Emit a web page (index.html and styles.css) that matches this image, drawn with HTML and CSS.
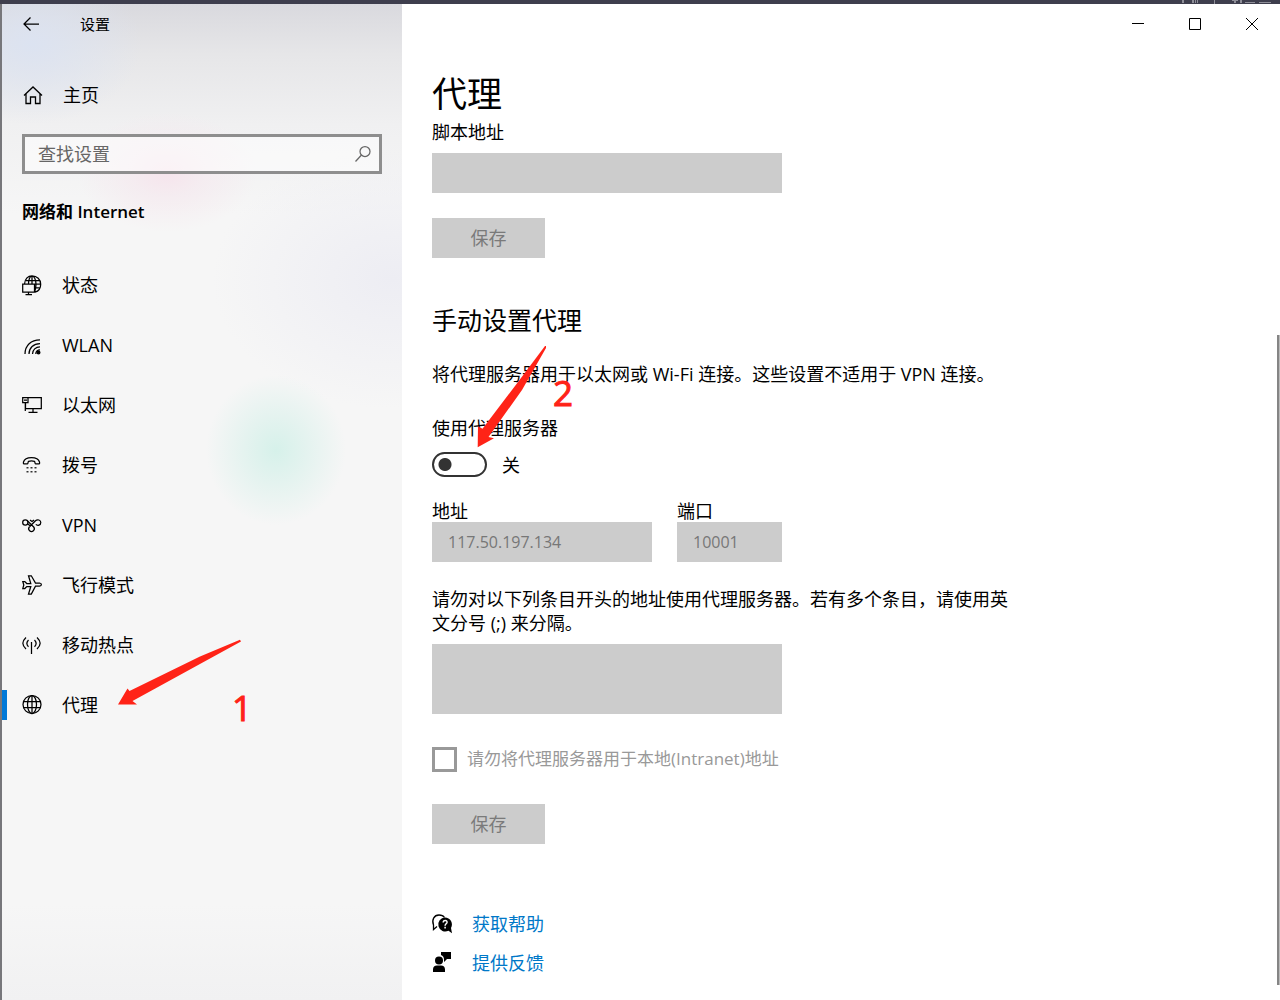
FILE: index.html
```html
<!DOCTYPE html>
<html lang="zh-CN">
<head>
<meta charset="utf-8">
<meta name="viewport" content="width=device-width, initial-scale=1">
<title>设置</title>
<link rel="stylesheet" href="styles.css">
</head>
<body>
<div class="backdrop">
  <svg width="100" height="4" viewBox="0 0 100 4" fill="#8e8e98"><path d="M2 0h2v3H2zM12 0h2v3h-2zM15 0h1v3h-1zM17 0h1v3h-1zM34 0h1v4h-1zM52 0h6v1h-6zM54 1h2v2h-2zM60 0h2v3h-2zM65 2h10v1H65zM79 2h12v1H79z"/></svg>
</div>
<div class="window">
  <aside class="sidebar">
    <div class="sidebar-title">
      <button class="back" aria-label="返回"><svg width="16" height="16" viewBox="0 0 16 16"><path d="M7.500 1.500 1 8l6.500 6.500M1 8h15"/></svg></button>
      <span>设置</span>
    </div>
    <a class="home" href="#"><svg width="20" height="20" viewBox="0 0 20 20"><path d="M1 10.500 10 2l9 8.500M3 9v9.500h4.500V12h5v6.500H17V9" stroke-width="1.300"/></svg>主页</a>
    <div class="search">
      <input type="text" placeholder="查找设置" aria-label="查找设置">
      <svg width="18" height="18" viewBox="0 0 18 18"><circle cx="11" cy="6.500" r="5"/><path d="M7.500 10 1.500 16.500"/></svg>
    </div>
    <h2 class="group">网络和 Internet</h2>
    <nav>
      <a href="#"><svg width="20" height="20" viewBox="0 0 20 20"><path d="M2.500 9C3 4 6 .8 10 .8c5 0 8.700 3.700 8.700 8.400 0 4-2.200 7-5.700 8M6.500 9c0-4.500 1.500-8.200 3.500-8.200s4 3.500 4 8.400c0 3-.3 5-1.300 7.500M4 5.500h13.500M13 12.800h5M10 1v8M12 9.200h6.500M.7 9.200h11.800v8H.7zM6.500 17.200V20M3.500 19.500h6.500"/></svg>状态</a>
      <a href="#"><svg width="20" height="20" viewBox="0 0 20 20"><path d="M3 19C3 10.500 9 4.800 18 4.800M7 19c0-6 4.500-10.500 11-10.500M10.500 19c0-4 3.300-7.200 7.500-7.200M13.800 19c0-2.300 1.800-4.200 4.200-4.200"/><circle cx="16.500" cy="17.500" r="1.400" fill="#000"/></svg>WLAN</a>
      <a href="#"><svg width="20" height="20" viewBox="0 0 20 20"><path d="M6 2.500h13.300v11H3.500v-6M11 13.500v4M6.500 17.300h9M.7 2.500H6v5H.7zM3.300 7.500V16M2 5h3"/></svg>以太网</a>
      <a href="#"><svg width="20" height="20" viewBox="0 0 20 20"><path d="M5.500 8.800H2C1.300 8.800 1.300 8 1.500 7c.8-3 4.500-4.500 8-4.500s7.200 1.500 8 4.500c.2 1 .2 1.800-.5 1.800h-3.500c-.7 0-.5-2.300-1-2.500-2-.6-4-.6-6 0-.5.2-.3 2.500-1 2.500z"/><path d="M4.500 12h2v1.500h-2zM8.500 12h2v1.500h-2zM12.500 12h2v1.500h-2zM4.500 16h2v1.500h-2zM8.500 16h2v1.500h-2zM12.500 16h2v1.500h-2z" fill="#333" stroke="none"/></svg>拨号</a>
      <a href="#"><svg width="20" height="20" viewBox="0 0 20 20"><circle cx="3.300" cy="7.500" r="2.600"/><path d="M5.300 5.700 11.700 12a2.800 2.800 0 1 1-4.400 0l6.200-6.200c2-2 5.300-.8 5.300 1.800 0 2.700-3.300 3.500-5 1.800M6 9l2.300 2M8 5l2 1.500L12 5"/></svg>VPN</a>
      <a href="#"><svg width="20" height="20" viewBox="0 0 20 20"><path d="M.8 6.500h2l2 2h4L6.500.8h2.800L13.500 8h4c2.500.4 2.500 2.800 0 3.200h-4L9.300 19H6.500l2.300-7.500h-4l-2 2h-2l1-3.500z"/></svg>飞行模式</a>
      <a href="#"><svg width="20" height="20" viewBox="0 0 20 20"><path d="M4 2.500c-4.200 4-4.200 7.500 0 11.500M15 2.500c4.200 4 4.200 7.500 0 11.500M6.500 5c-2.200 2.300-2.200 4.500 0 6.700M12.500 5c2.200 2.300 2.200 4.500 0 6.700M9.500 7v12"/></svg>移动热点</a>
      <a class="current" href="#" aria-current="page"><svg width="20" height="20" viewBox="0 0 20 20"><circle cx="10" cy="9.500" r="9"/><ellipse cx="10" cy="9.500" rx="4.500" ry="9"/><path d="M1.500 6.500h17M1.500 12.500h17M10 .5v18" /></svg>代理</a>
    </nav>
    <svg class="arrow arrow-side" width="126" height="66" viewBox="0 0 126 66"><path d="M1 65.500 10.500 49.500 12.500 52 83 17.500 123 .8l1 1.700L15.500 62l4.500 3.500z"/></svg>
    <span class="step step-side">1</span>
  </aside>
  <main>
    <div class="controls">
      <button aria-label="最小化"><svg width="14" height="14" viewBox="0 0 14 14"><path d="M1 6.500h12"/></svg></button>
      <button aria-label="最大化"><svg width="14" height="14" viewBox="0 0 14 14"><path d="M1.500 1.500h11v11h-11z"/></svg></button>
      <button aria-label="关闭"><svg width="14" height="14" viewBox="0 0 14 14"><path d="m1 1 12 12M13 1 1 13"/></svg></button>
    </div>
    <form class="content">
      <h1>代理</h1>
      <label class="script-label" for="script">脚本地址</label>
      <input class="wide" id="script" type="text" disabled>
      <button class="save" type="button" disabled>保存</button>
      <h2 class="section">手动设置代理</h2>
      <p class="intro">将代理服务器用于以太网或 Wi-Fi 连接。这些设置不适用于 VPN 连接。</p>
      <label class="use-label" for="use">使用代理服务器</label>
      <div class="toggle-row"><input class="toggle" id="use" type="checkbox" role="switch"><span>关</span></div>
      <div class="server">
        <div class="field address"><label for="address">地址</label><input id="address" type="text" value="117.50.197.134" disabled></div>
        <div class="field port"><label for="port">端口</label><input id="port" type="text" value="10001" disabled></div>
      </div>
      <label class="exceptions-label" for="exceptions">请勿对以下列条目开头的地址使用代理服务器。若有多个条目，请使用英文分号 (;) 来分隔。</label>
      <textarea id="exceptions" disabled></textarea>
      <div class="check-row"><input id="local" type="checkbox" disabled><label for="local">请勿将代理服务器用于本地(Intranet)地址</label></div>
      <button class="save save-last" type="button" disabled>保存</button>
      <div class="links">
        <a href="#"><svg width="20" height="20" viewBox="0 0 20 20"><path d="M5 12.500 1.500 15.500V11C-.5 6 2 1 7 1c3 0 4.500 1 5.500 2.500" fill="none" stroke="#000" stroke-width="1.300"/><path d="M13 3.500a7 7 0 1 0 3.500 13.200l3.500 2.600-1-5.300a7 7 0 0 0-6-10.500z"/><path d="M11.200 8.500c0-3 4.300-2.500 3.800 0-.3 1.300-1.900 1.300-1.900 3.200M13.100 12.800v1.600" fill="none" stroke="#fff" stroke-width="1.500"/></svg>获取帮助</a>
        <a href="#"><svg width="20" height="20" viewBox="0 0 20 20"><circle cx="7" cy="7.500" r="4"/><path d="M1 19v-2.500c0-2.500 1.500-4 4-4h4c2.500 0 4 1.500 4 4V19zM9 -1h10v7h-4l-3 3V7C12 4 11 3 9 2z"/></svg>提供反馈</a>
      </div>
    </form>
    <div class="scrollbar"></div>
    <svg class="arrow arrow-main" width="70" height="104" viewBox="0 0 70 104"><path d="m.7 102.300.3-21 4.500 2.500L38 41 68 1h1v2L45 45 11.500 92l5.500 1.300z"/></svg>
    <span class="step step-main">2</span>
  </main>
</div>
</body>
</html>
```
FILE: styles.css
```css
* { box-sizing: border-box; }
body {
  margin: 0;
  min-height: 100vh;
  display: flex;
  flex-direction: column;
  background: #fff;
  color: #000;
  font: 18px/24px "Open Sans", "Noto Sans CJK SC", sans-serif;
}
h1, h2, p { margin: 0; }
a { color: inherit; text-decoration: none; }
button, input, textarea { font: inherit; margin: 0; border: 0; border-radius: 0; }
svg { display: block; flex: none; overflow: visible; }

.backdrop {
  height: 4px;
  background: #3e3e4d;
  display: flex;
  justify-content: flex-end;
}
.backdrop svg { overflow: hidden; }
.window { flex: 1; display: flex; }

.sidebar {
  position: relative;
  width: 402px;
  flex: none;
  border-left: 2px solid #77777b;
  background:
    radial-gradient(70px 75px at 274px 446px, #d6f1ea 0, #d9f1ebaa 40%, #f5f5f500 100%),
    radial-gradient(90px 60px at 165px 168px, #f6e4ec 0, #f5e8eeaa 40%, #f5f5f500 100%),
    radial-gradient(180px 130px at 390px 275px, #ededf3 0, #f5f5f500 100%),
    radial-gradient(110px 80px at 30px 40px, #dce3f1 0, #e8ecf500 100%),
    linear-gradient(#d9d9de 0, #e6e6e8 50px, #f0f0f1 120px, #f6f6f6 210px, #f6f6f6 900px, #f1f1f2 100%);
}
.sidebar svg, .controls svg { fill: none; stroke: #000; stroke-width: 1.25; }
.sidebar-title { height: 40px; display: flex; align-items: center; font-size: 15px; }
.back { width: 58px; height: 40px; padding: 0 0 0 21px; background: none; margin-right: 20px; }
.home { height: 40px; margin-top: 31px; padding-left: 21px; display: flex; align-items: center; gap: 20px; }
.search {
  margin: 19px 20px 0;
  height: 40px;
  padding: 0 7px 0 13px;
  border: 3px solid #8e8e8e;
  background: #ffffff80;
  display: flex;
  align-items: center;
}
.search input { flex: 1; min-width: 0; padding: 0; background: none; outline: 0; }
.search input::placeholder { color: #666; opacity: 1; }
.sidebar .search svg { stroke: #666; }
.group { margin: 26px 20px 31px; font-size: 17px; line-height: 24px; font-weight: 600; }
nav a { height: 60px; padding-left: 20px; display: flex; align-items: center; gap: 20px; }
nav .current { background: linear-gradient(#0078d7, #0078d7) left center / 5px 30px no-repeat; }

main { position: relative; flex: 1; min-width: 0; }
.controls { height: 40px; display: flex; justify-content: flex-end; }
.controls button { width: 57px; padding: 0; background: none; display: grid; place-items: center; }
.controls svg { stroke-width: 1; }
.content { margin: 26px 30px 24px; display: flex; flex-direction: column; align-items: flex-start; }
h1 { font-size: 35px; line-height: 48px; font-weight: 400; }
.script-label { margin-top: 2px; }
.content input[type="text"], textarea { background: #ccc; color: #777; padding: 0 16px; height: 40px; width: 100%; }
.content .wide { max-width: 350px; margin-top: 9px; }
.save { width: 113px; height: 40px; padding: 0; margin-top: 25px; background: #ccc; color: #7a7a7a; }
.section { margin-top: 46px; font-size: 25px; line-height: 32px; font-weight: 400; }
.intro { margin-top: 26px; }
.use-label { margin-top: 30px; }
.toggle-row { margin-top: 12px; height: 25px; display: flex; align-items: center; gap: 15px; }
.toggle {
  appearance: none;
  width: 55px;
  height: 25px;
  border: 2px solid #333;
  border-radius: 13px;
  background: radial-gradient(circle at 11px 50%, #333 6px, #fff 7px);
}
.server { margin-top: 23px; display: flex; gap: 25px; }
.field { display: flex; flex-direction: column; line-height: 22px; }
.address { width: 220px; }
.port { width: 105px; }
.content .field input { font-size: 16px; }
.exceptions-label { max-width: 580px; margin-top: 25px; }
.content textarea { max-width: 350px; height: 70px; margin-top: 9px; resize: none; }
.check-row { margin-top: 32px; height: 26px; display: flex; align-items: center; gap: 10px; color: #999; font-size: 17px; }
.check-row input { appearance: none; width: 25px; height: 25px; border: 3px solid #999; }
.save-last { margin-top: 32px; }
.links { margin-top: 68px; display: flex; flex-direction: column; gap: 15px; color: #0078c8; }
.links a { display: flex; align-items: center; gap: 20px; }

.scrollbar { position: absolute; right: 0; top: 331px; bottom: 15px; width: 3px; background: #858585; border-right: 1px solid #bbb; }
.sidebar .arrow, .arrow { position: absolute; fill: #ff2317; stroke: none; pointer-events: none; }
.arrow-side { left: 115px; top: 635px; }
.arrow-main { left: 75px; top: 341px; }
.step { position: absolute; font-size: 35px; line-height: 40px; color: #ff2317; -webkit-text-stroke: 1px #ff2317; }
.step-side { left: 230px; top: 684px; }
.step-main { left: 151px; top: 369px; }
```
